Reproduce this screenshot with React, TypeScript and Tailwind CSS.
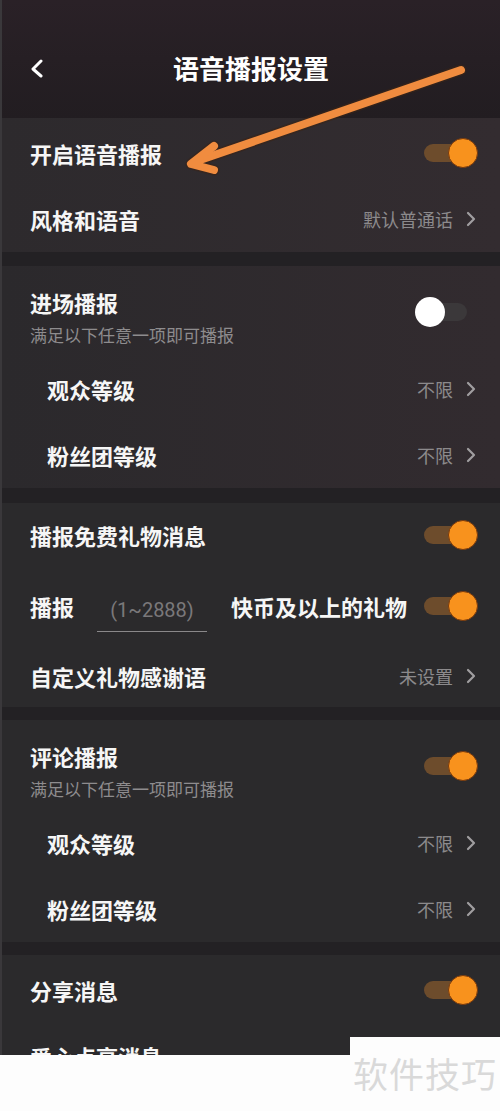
import React from "react";

const font = { fontFamily: '"Noto Sans CJK SC", "Noto Sans", sans-serif' };

function Toggle({ on }: { on: boolean }) {
  if (on) {
    return (
      <div className="relative w-[54px] h-[30px] shrink-0">
        <div className="absolute left-0 top-[6px] w-[46px] h-[18px] rounded-full bg-[#6d4c2c]" />
        <div className="absolute right-0 top-0 w-[30px] h-[30px] rounded-full bg-[#f8921d] border border-[#7a3a0c]" />
      </div>
    );
  }
  return (
    <div className="relative w-[52px] h-[30px] shrink-0">
      <div className="absolute left-[8px] top-[6px] w-[44px] h-[18px] rounded-full bg-[#3b383a]" />
      <div className="absolute left-0 top-0 w-[30px] h-[30px] rounded-full bg-white" />
    </div>
  );
}

function Chevron() {
  return (
    <svg width="10" height="16" viewBox="0 0 10 16" className="ml-[13px]">
      <polyline points="2,2 8,8 2,14" fill="none" stroke="#a09ea0" strokeWidth="2.2" strokeLinecap="round" strokeLinejoin="round" />
    </svg>
  );
}

function LinkRow({ label, value, indent, h = 66 }: { label: string; value: string; indent?: boolean; h?: number }) {
  return (
    <div
      className={`flex items-center justify-between pr-[24px] ${indent ? "pl-[45px]" : "pl-[28px]"}`}
      style={{ height: h }}
    >
      <span className="text-[22px] font-bold text-[#f6f6f6] leading-[28px]">{label}</span>
      <div className="flex items-center">
        <span className="text-[18px] text-[#8c8a8c] leading-[24px]">{value}</span>
        <Chevron />
      </div>
    </div>
  );
}

function ToggleRow({ label, on, h = 66 }: { label: string; on: boolean; h?: number }) {
  return (
    <div className="flex items-center justify-between pl-[28px] pr-[22px]" style={{ height: h }}>
      <span className="text-[22px] font-bold text-[#f6f6f6] leading-[28px]">{label}</span>
      <Toggle on={on} />
    </div>
  );
}

function HeadBlock({ title, on }: { title: string; on: boolean }) {
  return (
    <div className={`flex justify-between pl-[28px] pt-[22px] ${on ? "pr-[22px]" : "pr-[33px]"}`}>
      <div className="flex flex-col">
        <span className="text-[22px] font-bold text-[#f6f6f6] leading-[28px]">{title}</span>
        <span className="mt-[7px] text-[17px] text-[#8e8c8e] leading-[24px]">满足以下任意一项即可播报</span>
      </div>
      <div className="mt-[9px]">
        <Toggle on={on} />
      </div>
    </div>
  );
}

export default function App() {
  return (
    <div className="relative w-[500px] h-[1111px] overflow-hidden bg-[#fdfdfd]" style={font}>
      <div className="h-[1055px] overflow-hidden bg-[#232124] border-l-2 border-[#3a383b]">
        {/* header */}
        <div className="h-[118px] bg-gradient-to-b from-[#2a2127] to-[#221d21] relative flex items-center justify-center pt-[18px]">
          <svg width="14" height="20" viewBox="0 0 14 20" className="absolute left-[28px] top-[59px]">
            <polyline points="11,2 3,10 11,17" fill="none" stroke="#ffffff" strokeWidth="3" strokeLinecap="round" strokeLinejoin="round" />
          </svg>
          <span className="text-[26px] font-bold text-white leading-[34px]">语音播报设置</span>
        </div>

        {/* section 1 */}
        <div className="h-[134px] pt-[2px] bg-gradient-to-r from-[#2d2a2d] to-[#332c30]">
          <ToggleRow label="开启语音播报" on />
          <LinkRow label="风格和语音" value="默认普通话" />
        </div>
        <div className="h-[14px]" />

        {/* section 2 */}
        <div className="h-[222px] bg-gradient-to-r from-[#2b292c] to-[#322b2f]">
          <HeadBlock title="进场播报" on={false} />
          <div className="mt-[9px]">
            <LinkRow label="观众等级" value="不限" indent />
            <LinkRow label="粉丝团等级" value="不限" indent />
          </div>
        </div>
        <div className="h-[15px]" />

        {/* section 3 */}
        <div className="h-[204px] bg-[#2b2a2c]">
          <ToggleRow label="播报免费礼物消息" on h={64} />
          <div className="h-[78px] flex items-center pl-[28px] pr-[22px]">
            <span className="text-[22px] font-bold text-[#f6f6f6] leading-[28px]">播报</span>
            <div className="ml-[23px] w-[110px] h-[44px] flex items-center justify-center border-b border-[#8a888a] relative top-[4px]">
              <span className="text-[20px] text-[#7a787a] leading-[26px]" style={{ fontFamily: '"Roboto", "Noto Sans", sans-serif' }}>(1~2888)</span>
            </div>
            <span className="ml-[24px] text-[22px] font-bold text-[#f6f6f6] leading-[28px]">快币及以上的礼物</span>
            <div className="ml-auto">
              <Toggle on />
            </div>
          </div>
          <LinkRow label="自定义礼物感谢语" value="未设置" h={62} />
        </div>
        <div className="h-[13px]" />

        {/* section 4 */}
        <div className="h-[222px] bg-[#2b2a2c]">
          <HeadBlock title="评论播报" on />
          <div className="mt-[9px]">
            <LinkRow label="观众等级" value="不限" indent />
            <LinkRow label="粉丝团等级" value="不限" indent />
          </div>
        </div>
        <div className="h-[13px]" />

        {/* section 5 */}
        <div className="h-[200px] pt-[2px] bg-[#2b2a2c]">
          <ToggleRow label="分享消息" on />
          <ToggleRow label="爱心点亮消息" on />
        </div>
      </div>

      {/* watermark */}
      <div className="absolute left-[350px] top-[1037px] w-[150px] h-[74px] bg-[#fdfdfd] flex items-start justify-center pt-[14px]">
        <span className="text-[35px] leading-[44px] text-[#d9d9d9] tracking-[1px]">软件技巧</span>
      </div>

      {/* annotation arrow */}
      <svg className="absolute left-0 top-0 pointer-events-none" width="500" height="260" viewBox="0 0 500 260">
        <g fill="none" strokeLinecap="round" strokeLinejoin="round">
          <g stroke="#3a2418" strokeWidth="11" opacity="0.6">
            <line x1="461" y1="70" x2="200" y2="160" />
            <polyline points="214,146 191,164 214,170" />
          </g>
          <g stroke="#f08c3f" strokeWidth="8">
            <line x1="461" y1="70" x2="200" y2="160" />
            <polyline points="214,146 191,164 214,170" />
          </g>
        </g>
      </svg>
    </div>
  );
}
